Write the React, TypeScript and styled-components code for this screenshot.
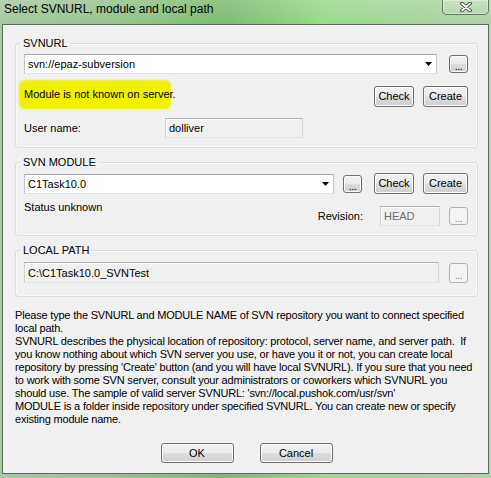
import React from 'react';
import styled, { createGlobalStyle } from 'styled-components';

const ui = `"Liberation Sans", Arial, sans-serif`;

const GlobalStyle = createGlobalStyle`
  html, body {
    margin: 0;
    padding: 0;
    background: #fff;
  }
  #root {
    width: 491px;
    height: 478px;
  }
`;

const Frame = styled.div`
  width: 491px;
  height: 478px;
  box-sizing: border-box;
  display: flex;
  flex-direction: column;
  padding: 0 2px 4px 2px;
  background:
    linear-gradient(180deg, rgba(255, 255, 255, 0.15) 0px, rgba(255, 255, 255, 0) 24px),
    linear-gradient(90deg, #a9c7a3 0%, #98c48f 22%, #7dbb71 46%, #99db8b 66%, #a6d49c 84%, #b3d0ad 100%);
  font-family: ${ui};
  font-size: 11px;
  color: #000;
`;

const TitleBar = styled.div`
  height: 24px;
  flex: none;
  display: flex;
  justify-content: space-between;
  align-items: flex-start;
`;

const Title = styled.span`
  padding: 2px 0 0 2px;
  font-family: ${ui};
  font-size: 12px;
  line-height: 15px;
  color: #000;
`;

const CloseButton = styled.div`
  width: 47px;
  height: 15px;
  box-sizing: border-box;
  display: flex;
  align-items: center;
  justify-content: center;
  border: 1px solid rgba(50, 70, 50, 0.65);
  border-top: none;
  border-radius: 0 0 5px 5px;
  background: linear-gradient(180deg, rgba(220, 235, 215, 0.5), rgba(190, 215, 185, 0.35));
  box-shadow: inset 0 0 0 1px rgba(255, 255, 255, 0.35);
`;

const Client = styled.div`
  flex: 1;
  display: flex;
  flex-direction: column;
  padding: 12px 10px 10px 12px;
  background: #f0f0f0;
  border: 1px solid #5b6e5b;
`;

const GroupBox = styled.fieldset<{ $mt?: number; $pb: number }>`
  margin: ${p => p.$mt ?? 0}px 0 0 0;
  padding: 0 9px ${p => p.$pb}px 8px;
  min-width: 0;
  border: 1px solid #d5dfe5;
  border-radius: 3px;
  box-shadow: inset 0 0 0 1px rgba(255, 255, 255, 0.6);
`;

const Caption = styled.legend`
  margin-left: -3px;
  padding: 0 2px;
  font-size: 11px;
  line-height: 13px;
`;

const Row = styled.div<{ $mt?: number; $align?: string }>`
  display: flex;
  align-items: ${p => p.$align ?? 'center'};
  margin-top: ${p => p.$mt ?? 0}px;
`;

const Pair = styled.div<{ $mt?: number }>`
  display: flex;
  align-items: center;
  gap: 9px;
  margin-left: auto;
  margin-top: ${p => p.$mt ?? 0}px;
`;

const Combo = styled.div<{ $w: number }>`
  width: ${p => p.$w}px;
  height: 20px;
  box-sizing: border-box;
  flex: none;
  display: flex;
  align-items: center;
  justify-content: space-between;
  padding: 0 4px 0 3px;
  background: #fff;
  border: 1px solid;
  border-color: #a7abb1 #c3c7cd #dde2e8 #c3c7cd;
`;

const Field = styled.div<{ $w: number; $h?: number; $muted?: boolean }>`
  width: ${p => p.$w}px;
  height: ${p => p.$h ?? 20}px;
  box-sizing: border-box;
  flex: none;
  display: flex;
  align-items: center;
  padding: 0 3px;
  background: #f0f0f0;
  border: 1px solid;
  border-color: #b3b3b3 #d6d6d6 #e2e2e2 #d0d0d0;
  box-shadow: inset 1px 1px 0 #fafafa;
  color: ${p => (p.$muted ? '#6d6d6d' : '#000')};
`;

const Button = styled.button<{ $w: number; $h?: number }>`
  width: ${p => p.$w}px;
  height: ${p => p.$h ?? 21}px;
  box-sizing: border-box;
  flex: none;
  padding: 0;
  font-family: ${ui};
  font-size: 11px;
  line-height: 1;
  color: #000;
  border: 1px solid #707070;
  border-radius: 3px;
  background: linear-gradient(180deg, #f2f2f2 0%, #ebebeb 48%, #dddddd 52%, #cfcfcf 100%);
  box-shadow: inset 0 0 0 1px #fbfbfb;

  &:disabled {
    border-color: #adb2b5;
    background: #f4f4f4;
    color: #8d8d8d;
    box-shadow: none;
  }
`;

const Browse = styled(Button)`
  padding-top: 5px;
  letter-spacing: -0.5px;
`;

const Highlight = styled.span`
  display: inline-block;
  width: 142px;
  margin-top: 11px;
  padding: 3px 0;
  line-height: 13px;
  white-space: nowrap;
  background: #f0f000;
  border-radius: 2px;
  box-shadow: 0 0 2px 5px #f0f000;
`;

const Label = styled.span<{ $w?: number; $mt?: number; $gap?: number }>`
  width: ${p => (p.$w ? `${p.$w}px` : 'auto')};
  flex: none;
  margin-top: ${p => p.$mt ?? 0}px;
  margin-right: ${p => p.$gap ?? 0}px;
  line-height: 13px;
`;

const Help = styled.p`
  margin: 12px 0 0 0;
  line-height: 13px;
  letter-spacing: -0.2px;
  white-space: pre;
`;

const Footer = styled.div`
  margin-top: auto;
  display: flex;
  justify-content: center;
  gap: 26px;
`;

const DropArrow = () => (
  <svg width="7" height="4" viewBox="0 0 7 4">
    <polygon points="0,0 7,0 3.5,4" fill="#000" />
  </svg>
);

const CloseGlyph = () => (
  <svg width="12" height="10" viewBox="0 0 12 10">
    <path d="M2 1.5 L10 8.5 M10 1.5 L2 8.5" stroke="#3b3b3b" strokeWidth="3.6" strokeLinecap="round" />
    <path d="M2 1.5 L10 8.5 M10 1.5 L2 8.5" stroke="#fff" strokeWidth="1.8" strokeLinecap="round" />
  </svg>
);

const helpText = [
  'Please type the SVNURL and MODULE NAME of SVN repository you want to connect specified',
  'local path.',
  'SVNURL describes the physical location of repository: protocol, server name, and server path.  If',
  'you know nothing about which SVN server you use, or have you it or not, you can create local',
  "repository by pressing 'Create' button (and you will have local SVNURL). If you sure that you need",
  'to work with some SVN server, consult your administrators or coworkers which SVNURL you',
  "should use. The sample of valid server SVNURL: 'svn://local.pushok.com/usr/svn'",
  'MODULE is a folder inside repository under specified SVNURL. You can create new or specify',
  'existing module name.',
].join('\n');

export default function App() {
  return (
    <>
      <GlobalStyle />
      <Frame>
        <TitleBar>
          <Title>Select SVNURL, module and local path</Title>
          <CloseButton>
            <CloseGlyph />
          </CloseButton>
        </TitleBar>
        <Client>
          <GroupBox $pb={9}>
            <Caption>SVNURL</Caption>
            <Row $mt={4}>
              <Combo $w={413}>
                <span>svn://epaz-subversion</span>
                <DropArrow />
              </Combo>
              <Browse $w={19} $h={18} style={{ marginLeft: 'auto' }}>...</Browse>
            </Row>
            <Row $align="flex-start">
              <Highlight>Module is not known on server.</Highlight>
              <Pair $mt={12}>
                <Button $w={40}>Check</Button>
                <Button $w={45}>Create</Button>
              </Pair>
            </Row>
            <Row $mt={11}>
              <Label $w={141}>User name:</Label>
              <Field $w={138}>dolliver</Field>
            </Row>
          </GroupBox>

          <GroupBox $mt={8} $pb={9}>
            <Caption>SVN MODULE</Caption>
            <Row $mt={4}>
              <Combo $w={310}>
                <span>C1Task10.0</span>
                <DropArrow />
              </Combo>
              <Browse $w={19} $h={18} style={{ marginLeft: 9 }}>...</Browse>
              <Pair>
                <Button $w={40}>Check</Button>
                <Button $w={45}>Create</Button>
              </Pair>
            </Row>
            <Row $align="flex-start">
              <Label $mt={7}>Status unknown</Label>
              <Pair $mt={12}>
                <Label $gap={8}>Revision:</Label>
                <Field $w={60} $muted>HEAD</Field>
                <Browse $w={19} $h={18} disabled>...</Browse>
              </Pair>
            </Row>
          </GroupBox>

          <GroupBox $mt={8} $pb={13}>
            <Caption>LOCAL PATH</Caption>
            <Row $mt={5}>
              <Field $w={415} $h={21}>C:\C1Task10.0_SVNTest</Field>
              <Browse $w={19} $h={20} disabled style={{ marginLeft: 'auto' }}>...</Browse>
            </Row>
          </GroupBox>

          <Help>{helpText}</Help>

          <Footer>
            <Button $w={73} $h={20}>OK</Button>
            <Button $w={73} $h={20}>Cancel</Button>
          </Footer>
        </Client>
      </Frame>
    </>
  );
}
